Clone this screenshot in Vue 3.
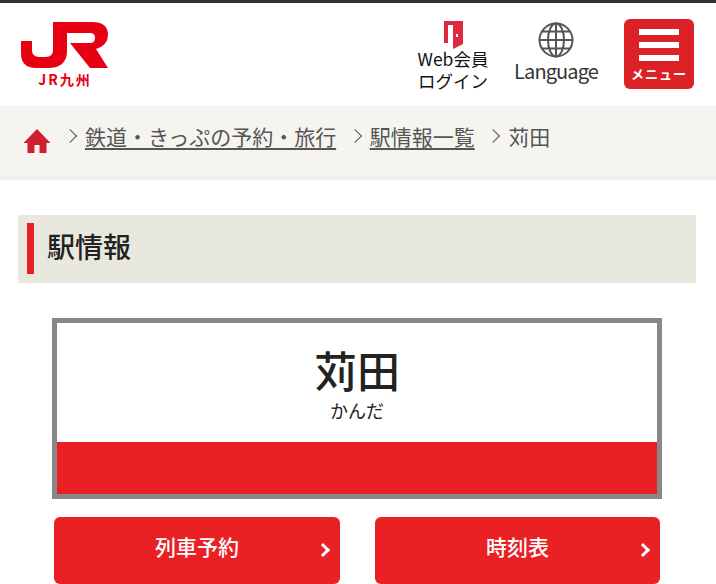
<script setup>
const crumbs = ["鉄道・きっぷの予約・旅行", "駅情報一覧"]
const actions = ["列車予約", "時刻表"]
</script>

<template>
  <div class="page">
    <header class="header">
      <div class="logo">
        <svg class="logoMark" width="90" height="48" viewBox="0 0 90 48">
          <path fill="#e60012" d="M33 1H72Q88 1 88 14Q88 24 76 28L88 47H70L50 22H70Q75 22 75 17Q75 12 70 12H47V30Q47 47 28 47H16Q1 47 1 32V20H12V29Q12 36 19 36H26Q33 36 33 29Z" />
        </svg>
        <span class="logoText">JR九州</span>
      </div>
      <nav class="headerNav">
        <a class="navItem login">
          <svg width="20" height="28" viewBox="0 0 20 28">
            <path fill="#e0293f" fill-rule="evenodd" d="M0 0H19V23L9 28V4H4V22H0ZM12 13H14V16H12Z" />
          </svg>
          <span>Web会員<br />ログイン</span>
        </a>
        <a class="navItem language">
          <svg width="36" height="36" viewBox="0 0 36 36" fill="none" stroke="#555" stroke-width="2">
            <circle cx="18" cy="18" r="16.500" />
            <ellipse cx="18" cy="18" rx="8" ry="16.500" />
            <path d="M18 1.500V34.500M1.500 18H34.500M4 9.500H32M4 26.500H32" />
          </svg>
          <span>Language</span>
        </a>
        <a class="menuButton">
          <span class="menuBars"><i></i><i></i><i></i></span>
          <span class="menuLabel">メニュー</span>
        </a>
      </nav>
    </header>

    <div class="breadcrumb">
      <svg class="home" width="28" height="26" viewBox="0 0 28 26">
        <path fill="#d0202e" d="M14 1L27.500 15H23.500V25H16.500V17H11.500V25H4.500V15H0.500Z" />
      </svg>
      <template v-for="crumb in crumbs" :key="crumb">
        <span class="sep"></span>
        <a class="crumbLink">{{ crumb }}</a>
      </template>
      <span class="sep"></span>
      <span class="current">苅田</span>
    </div>

    <main class="content">
      <h2 class="sectionTitle"><span>駅情報</span></h2>

      <section class="station">
        <div class="stationName">
          <h1>苅田</h1>
          <p>かんだ</p>
        </div>
        <div class="stationBand"></div>
      </section>

      <div class="actions">
        <a v-for="action in actions" :key="action" class="actionButton">{{ action }}</a>
      </div>
    </main>
  </div>
</template>

<style>
html, body {
  margin: 0;
  background: #fff;
}
</style>

<style scoped>
.page {
  width: 716px;
  height: 584px;
  overflow: hidden;
  border-top: 3px solid #2e3338;
  box-sizing: border-box;
  font-family: "Noto Sans CJK JP", "Noto Sans", sans-serif;
  color: #222;
}

.header {
  height: 103px;
  display: flex;
  justify-content: space-between;
  padding: 0 22px 0 20px;
  box-sizing: border-box;
}

.logo {
  display: flex;
  flex-direction: column;
  align-items: center;
  width: 90px;
  padding-top: 18px;
}

.logoMark {
  display: block;
}

.logoText {
  margin-top: 3px;
  font-size: 14px;
  line-height: 15px;
  font-weight: 700;
  letter-spacing: 2px;
  color: #e60012;
}

.headerNav {
  display: flex;
  align-items: flex-start;
}

.navItem {
  display: flex;
  flex-direction: column;
  align-items: center;
  text-align: center;
  white-space: nowrap;
}

.login {
  width: 72px;
  padding-top: 18px;
  font-size: 17.500px;
  line-height: 22px;
  color: #111;
}

.login svg {
  margin: 0 0 -1px 1px;
}

.language {
  width: 84px;
  margin: 0 26px 0 25px;
  padding-top: 19px;
  font-size: 20px;
  letter-spacing: -0.900px;
  line-height: 24px;
  color: #333;
}

.language svg {
  margin-bottom: 1px;
}

.menuButton {
  width: 70px;
  height: 70px;
  margin-top: 16px;
  background: #dc2227;
  border-radius: 6px;
  display: flex;
  flex-direction: column;
  align-items: center;
  color: #fff;
}

.menuBars {
  display: flex;
  flex-direction: column;
  gap: 7px;
  margin-top: 10px;
}

.menuBars i {
  display: block;
  width: 40px;
  height: 6px;
  background: #fff;
}

.menuLabel {
  margin-top: 4px;
  font-size: 13px;
  line-height: 18px;
  font-weight: 700;
  letter-spacing: 1px;
}

.breadcrumb {
  height: 74px;
  background: #f5f4ef;
  border-bottom: 5px solid #f0f0ee;
  box-sizing: border-box;
  display: flex;
  align-items: center;
  padding: 0 0 10px 23px;
  font-size: 21px;
  color: #555;
}

.home {
  margin-top: 10px;
  margin-right: 14px;
}

.sep {
  width: 10px;
  height: 10px;
  margin: 0 10px 0 0;
  border-top: 1.500px solid #555;
  border-right: 1.500px solid #555;
  transform: rotate(45deg);
  flex: none;
  box-sizing: border-box;
}

.crumbLink {
  text-decoration: underline;
  text-underline-offset: 3px;
  margin-right: 13.500px;
}

.content {
  padding: 35px 20px 0 18px;
}

.sectionTitle {
  margin: 0;
  height: 68px;
  background: #e9e8de;
  padding: 8px 0 9px 9px;
  box-sizing: border-box;
  font-size: 28px;
  font-weight: 500;
  line-height: 47px;
}

.sectionTitle span {
  display: block;
  height: 51px;
  border-left: 7px solid #e92024;
  padding-left: 13px;
}

.station {
  margin: 35px 0 0 34px;
  width: 610px;
  height: 181px;
  border: 5px solid #888;
  box-sizing: border-box;
  display: flex;
  flex-direction: column;
}

.stationName {
  flex: 1;
  text-align: center;
}

.stationName h1 {
  margin: 16px 0 0;
  font-size: 43px;
  font-weight: 500;
  line-height: 60px;
}

.stationName p {
  margin: 1px 0 0;
  font-size: 18px;
  line-height: 20px;
}

.stationBand {
  height: 52px;
  background: #e92024;
}

.actions {
  display: grid;
  grid-template-columns: 286px 285px;
  column-gap: 35px;
  margin: 18px 0 0 36px;
}

.actionButton {
  position: relative;
  height: 67px;
  background: #e92024;
  border-radius: 6px;
  display: flex;
  align-items: center;
  justify-content: center;
  padding-bottom: 10px;
  box-sizing: border-box;
  color: #fff;
  font-size: 21px;
  font-weight: 500;
}

.actionButton::after {
  content: "";
  position: absolute;
  right: 12px;
  top: 28px;
  width: 10px;
  height: 10px;
  border-top: 3px solid #fff;
  border-right: 3px solid #fff;
  transform: rotate(45deg);
  box-sizing: border-box;
}
</style>
